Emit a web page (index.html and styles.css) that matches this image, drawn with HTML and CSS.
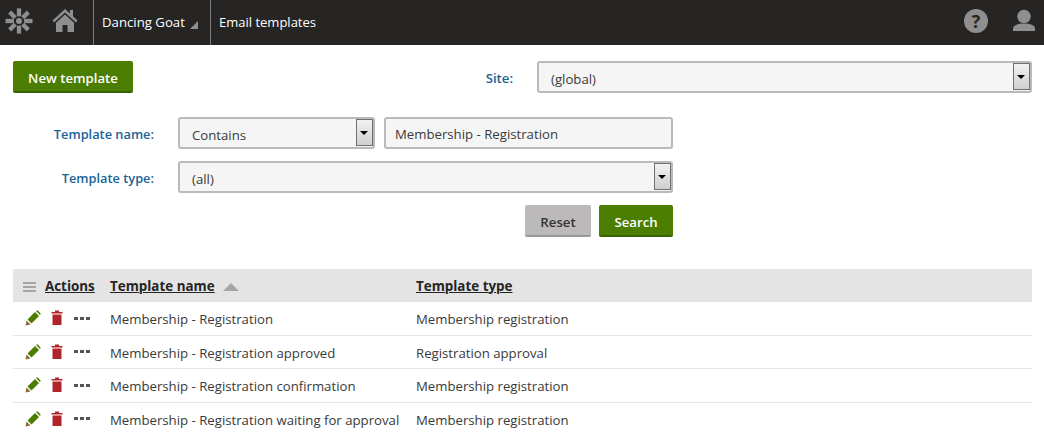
FILE: index.html
```html
<!DOCTYPE html>
<html lang="en">
<head>
  <meta charset="UTF-8">
  <title>Email templates</title>
  <link rel="stylesheet" href="styles.css">
</head>
<body>

  <nav class="topbar">
    <a class="logo" href="#">
      <svg width="28" height="28" viewBox="0 0 30 30">
        <circle cx="15" cy="15" r="3.2" fill="#8f8f8f"/>
        <g stroke="#8f8f8f" stroke-width="4.6">
          <path d="M15 1.500V10"/>
          <path d="M15 20V28.500"/>
          <path d="M0.500 15H9.500"/>
          <path d="M20.500 15H29.500"/>
          <path d="M5 5.500L11 11.500"/>
          <path d="M19 18.500L25 24.500"/>
          <path d="M25 5.500L19 11.500"/>
          <path d="M11 18.500L5 24.500"/>
        </g>
      </svg>
    </a>
    <a class="home" href="#">
      <svg width="26" height="26" viewBox="0 0 26 26">
        <path d="M13 1L0.500 12.500L2 14.500L13 4.500L24 14.500L25.500 12.500L21 8.300V2H18V5.500Z" fill="#8f8f8f"/>
        <path d="M13 6.500L4 14.800V24H10.500V17H15.500V24H22V14.800Z" fill="#8f8f8f"/>
      </svg>
    </a>
    <a class="crumb crumb-site" href="#">Dancing Goat <span class="corner"></span></a>
    <a class="crumb" href="#">Email templates</a>
    <div class="topbar-right">
      <span class="help">?</span>
      <svg class="user" width="24" height="24" viewBox="0 0 24 24">
        <circle cx="12" cy="7.500" r="6.800" fill="#8f8f8f"/>
        <path d="M1 22V19.500C1 16 6 14.500 12 14.500S23 16 23 19.500V22Z" fill="#8f8f8f"/>
      </svg>
    </div>
  </nav>

  <div class="page">
    <div class="top-row">
      <a class="btn btn-primary btn-new" href="#">New template</a>
      <label class="site-label">Site:</label>
      <div class="select site-select">(global)<span class="arrow"></span></div>
    </div>

    <div class="filter">
      <label>Template name:</label>
      <div class="name-fields">
        <div class="select contains">Contains<span class="arrow"></span></div>
        <div class="textbox">Membership - Registration</div>
      </div>
      <label>Template type:</label>
      <div class="select">(all)<span class="arrow"></span></div>
      <div class="filter-buttons">
        <a class="btn btn-grey" href="#">Reset</a>
        <a class="btn btn-primary btn-search" href="#">Search</a>
      </div>
    </div>

    <table class="grid">
      <thead>
        <tr>
          <th class="col-actions"><span class="menu-icon"></span><a href="#">Actions</a></th>
          <th class="col-name"><a href="#">Template name</a><span class="sort-up"></span></th>
          <th><a href="#">Template type</a></th>
        </tr>
      </thead>
      <tbody>
        <tr>
          <td class="col-actions">
            <svg class="ico" width="16" height="16" viewBox="0 0 16 16"><use href="#pencil"/></svg>
            <svg class="ico" width="12" height="16" viewBox="0 0 12 16"><use href="#bin"/></svg>
            <span class="dots"><i></i><i></i><i></i></span>
          </td>
          <td>Membership - Registration</td>
          <td>Membership registration</td>
        </tr>
        <tr>
          <td class="col-actions">
            <svg class="ico" width="16" height="16" viewBox="0 0 16 16"><use href="#pencil"/></svg>
            <svg class="ico" width="12" height="16" viewBox="0 0 12 16"><use href="#bin"/></svg>
            <span class="dots"><i></i><i></i><i></i></span>
          </td>
          <td>Membership - Registration approved</td>
          <td>Registration approval</td>
        </tr>
        <tr>
          <td class="col-actions">
            <svg class="ico" width="16" height="16" viewBox="0 0 16 16"><use href="#pencil"/></svg>
            <svg class="ico" width="12" height="16" viewBox="0 0 12 16"><use href="#bin"/></svg>
            <span class="dots"><i></i><i></i><i></i></span>
          </td>
          <td>Membership - Registration confirmation</td>
          <td>Membership registration</td>
        </tr>
        <tr>
          <td class="col-actions">
            <svg class="ico" width="16" height="16" viewBox="0 0 16 16"><use href="#pencil"/></svg>
            <svg class="ico" width="12" height="16" viewBox="0 0 12 16"><use href="#bin"/></svg>
            <span class="dots"><i></i><i></i><i></i></span>
          </td>
          <td>Membership - Registration waiting for approval</td>
          <td>Membership registration</td>
        </tr>
      </tbody>
    </table>
  </div>

  <!-- icons used by the grid rows -->
  <svg class="defs" width="0" height="0">
    <symbol id="pencil" viewBox="0 0 16 16">
      <path d="M0.500 15.500L1.500 10.500L5.500 14.500Z" fill="#8a6d2f"/>
      <path d="M2.500 9.500L10 2L14 6L6.500 13.500Z" fill="#4b7d00"/>
      <path d="M11 1L12.500 0.300L15.700 3.500L15 5Z" fill="#4b7d00"/>
    </symbol>
    <symbol id="bin" viewBox="0 0 12 16">
      <path d="M0.500 2H4V0.500H8V2H11.500V3.500H0.500Z" fill="#b0252a"/>
      <path d="M1.500 4.500H10.500V15H1.500Z" fill="#b0252a"/>
    </symbol>
  </svg>

</body>
</html>
```

FILE: styles.css
```css
body {
  margin: 0;
  height: 435px;
  overflow: hidden;
  font-family: "Open Sans", "Noto Sans", sans-serif;
  font-size: 13.2px;
  color: #3a3a3a;
  background-color: white;
}

a {
  color: inherit;
  text-decoration: none;
}

/* Top bar */
.topbar {
  display: flex;
  align-items: stretch;
  height: 45px;
  background-color: #262524;
  color: white;
  font-size: 13px;
}
.logo {
  display: flex;
  align-items: center;
  width: 35px;
  padding: 0 0 3px 5px;
  box-sizing: border-box;
}
.home {
  display: flex;
  align-items: center;
  width: 58px;
  padding: 0 0 3px 17px;
  box-sizing: border-box;
}
.crumb {
  display: flex;
  align-items: center;
  padding: 0 8px 2px;
  border-left: 1px solid #7b7b7b;
}
.crumb-site {
  box-sizing: border-box;
  width: 117px;
  font-size: 13.2px;
}
.corner {
  width: 0;
  height: 0;
  margin: 7px 0 0 5px;
  border-left: 8px solid transparent;
  border-bottom: 8px solid #8f8f8f;
}
.topbar-right {
  display: flex;
  align-items: center;
  gap: 24px;
  margin-left: auto;
  padding: 0 8px 3px 0;
}
.help {
  width: 24px;
  height: 24px;
  border-radius: 50%;
  background-color: #8f8f8f;
  color: #262524;
  font-size: 18px;
  font-weight: bold;
  line-height: 24px;
  text-align: center;
}

/* Page content */
.page {
  padding: 16px 12px 0 13px;
}
.top-row {
  display: flex;
  align-items: flex-start;
}
.btn {
  display: block;
  box-sizing: border-box;
  height: 32px;
  border-radius: 2px;
  line-height: 35px;
  font-weight: 600;
  text-align: center;
  white-space: nowrap;
}
.btn-primary {
  background-color: #4b7d00;
  border-bottom: 2px solid #3a6100;
  color: white;
}
.btn-grey {
  width: 66px;
  background-color: #bbb9b9;
  border-bottom: 2px solid #9a9898;
  color: #333;
}
.btn-new {
  width: 120px;
}
.btn-search {
  width: 74px;
}
.site-label {
  width: 380px;
  margin-top: 8px;
  color: #1a6496;
  font-weight: 600;
  text-align: right;
}
.select, .textbox {
  position: relative;
  box-sizing: border-box;
  height: 32px;
  padding-left: 12px;
  border: 2px solid #bbb9b9;
  border-radius: 3px;
  background-color: #f5f5f5;
  line-height: 32px;
}
.site-select {
  width: 495px;
  margin-left: 24px;
}
.arrow {
  position: absolute;
  top: 0;
  right: 0;
  box-sizing: border-box;
  width: 17px;
  height: 27px;
  border: 1px solid #707070;
  background: linear-gradient(#f2f2f2, #cfcfcf);
}
.arrow::after {
  content: "";
  position: absolute;
  top: 11px;
  left: 3px;
  border-top: 4px solid black;
  border-left: 4px solid transparent;
  border-right: 4px solid transparent;
}

/* Filter form */
.filter {
  display: grid;
  grid-template-columns: 141px 495px;
  column-gap: 24px;
  row-gap: 12px;
  margin-top: 24px;
}
.filter label {
  align-self: center;
  padding-top: 2px;
  color: #1a6496;
  font-weight: 600;
  font-size: 12.8px;
  text-align: right;
}
.name-fields {
  display: flex;
  gap: 9px;
}
.contains {
  width: 197px;
}
.textbox {
  flex: 1;
  padding-left: 9px;
  line-height: 30px;
}
.filter-buttons {
  grid-column: 2;
  display: flex;
  justify-content: flex-end;
  gap: 8px;
}

/* Grid */
.grid {
  width: 1019px;
  margin-top: 32px;
  border-collapse: collapse;
}
.grid th {
  height: 33px;
  padding: 0;
  background-color: #e4e4e4;
  color: #262524;
  font-size: 13.4px;
  font-weight: bold;
  text-align: left;
}
.grid th a {
  text-decoration: underline;
}
.grid td {
  height: 30.5px;
  padding: 2px 0 0;
  border-bottom: 1px solid #e4e4e4;
}
.grid tr:last-child td {
  border-bottom: none;
}
.col-actions {
  width: 97px;
  white-space: nowrap;
}
.col-name {
  width: 306px;
}
.menu-icon {
  display: inline-block;
  width: 13px;
  height: 2px;
  margin: 0 9px 3px 10px;
  background-color: #a5a5a5;
  box-shadow: 0 -4px 0 #a5a5a5, 0 4px 0 #a5a5a5;
}
.sort-up {
  display: inline-block;
  margin: 0 0 0 8px;
  border-bottom: 8px solid #a5a5a5;
  border-left: 8px solid transparent;
  border-right: 8px solid transparent;
}
.ico {
  vertical-align: middle;
}
.grid td.col-actions {
  padding: 0 0 2px 12px;
  box-sizing: border-box;
}
td.col-actions .ico:first-child {
  margin-right: 7px;
}
td.col-actions .ico + .ico {
  margin-right: 7px;
}
.dots {
  display: inline-flex;
  gap: 2px;
  vertical-align: middle;
}
.dots i {
  width: 4px;
  height: 3px;
  background-color: #555;
}
.defs {
  position: absolute;
}
```
